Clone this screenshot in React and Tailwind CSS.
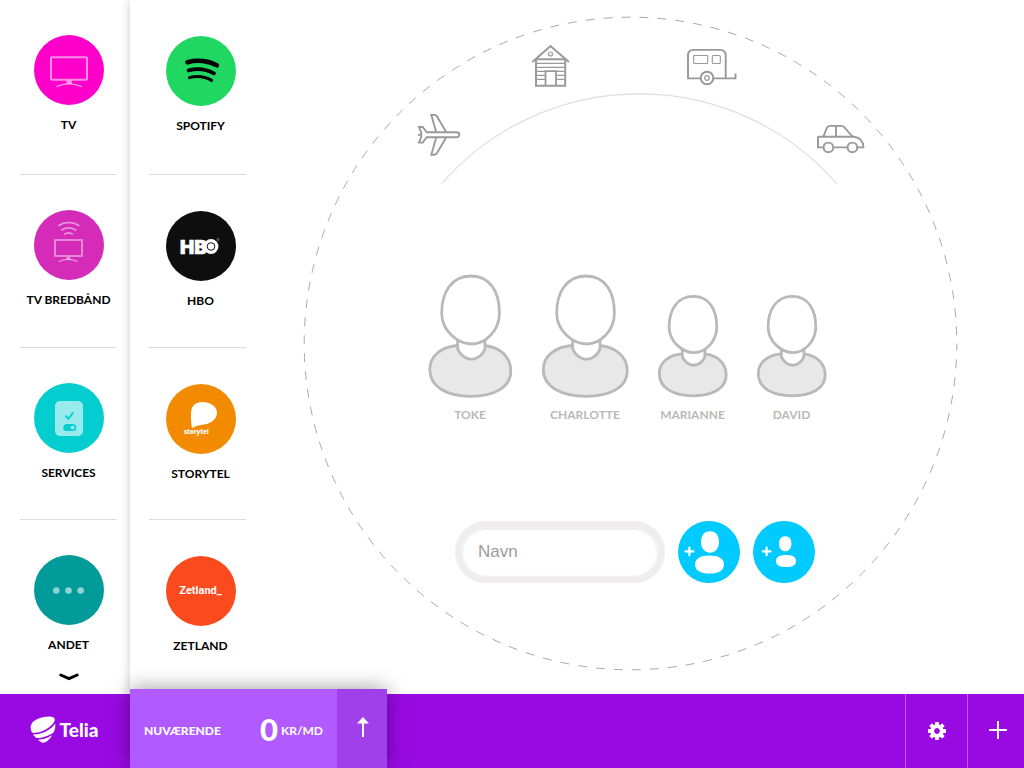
import React from 'react';

const toothAngles = [0, 45, 90, 135, 180, 225, 270, 315];

function TvIcon() {
  return (
    <svg className="size-[70px]" viewBox="0 0 70 70" fill="none" stroke="#fff" strokeOpacity="0.55" strokeWidth="2" aria-hidden="true">
      <rect x="17" y="22.3" width="36" height="22.4" rx="1" />
      <path d="M32.3 47.2h5.6" strokeWidth="3.4" />
      <path d="M22.3 51.6C30 48 40 48 47.8 51.6" strokeWidth="1.3" />
    </svg>
  );
}

function TvBroadbandIcon() {
  return (
    <svg className="size-[70px]" viewBox="0 0 70 70" fill="none" stroke="#fff" strokeOpacity="0.5" strokeWidth="1.7" aria-hidden="true">
      <path d="M24.3 15.7c6.5-4.2 14.5-4.2 21 0" />
      <path d="M27.2 20.3c4.6-3 10.4-3 15 0" />
      <path d="M30.3 24.3c2.6-1.8 6-1.8 8.6 0" />
      <rect x="21" y="30" width="27" height="16" />
      <path d="M32.6 48.2h3.6" strokeWidth="2.6" />
      <path d="M24.8 51.8c6-3 13-3 19.2 0" strokeWidth="1.2" />
    </svg>
  );
}

function ServicesIcon() {
  return (
    <svg className="size-[70px]" viewBox="0 0 70 70" fill="none" aria-hidden="true">
      <rect x="21" y="18" width="28" height="35" rx="5" fill="#99ebeb" />
      <path d="M31.3 32.5l3.2 3.3 4.8-6.6" stroke="#04cdd0" strokeWidth="1.8" />
      <rect x="29.3" y="41" width="13" height="7" rx="3.5" fill="#04cdd0" />
      <circle cx="38.7" cy="44.5" r="1.9" fill="#99ebeb" />
    </svg>
  );
}

function DotsIcon() {
  return (
    <svg className="size-[70px]" viewBox="0 0 70 70" fill="#8fd3d3" aria-hidden="true">
      <circle cx="22.3" cy="35.5" r="3.3" />
      <circle cx="34.5" cy="35.5" r="3.3" />
      <circle cx="46.7" cy="35.5" r="3.3" />
    </svg>
  );
}

function SpotifyIcon() {
  return (
    <svg className="size-[70px]" viewBox="0 0 70 70" fill="none" stroke="#000" strokeLinecap="round" aria-hidden="true">
      <circle cx="36" cy="34" r="23" stroke="#2bdc6b" strokeWidth="1" strokeDasharray="4 3" />
      <path d="M21.5 26.2C31 23.6 42.5 24.6 50.8 29.3" strokeWidth="4.6" />
      <path d="M22.6 34.4C31 32 40.5 33.2 48 37.4" strokeWidth="3.7" />
      <path d="M23.4 41.6C31 39.8 39 40.6 45.6 44.4" strokeWidth="3" />
    </svg>
  );
}

function HboIcon() {
  return (
    <svg className="size-[70px]" viewBox="0 0 70 70" aria-hidden="true">
      <text x="14" y="42.5" fill="#fff" stroke="#fff" strokeWidth="0.6" fontFamily="Inter, sans-serif" fontWeight="900" fontSize="19">HB</text>
      <circle cx="45" cy="35.5" r="7.4" fill="#fff" />
      <circle cx="45" cy="35.5" r="3.8" fill="none" stroke="#0e0e0e" strokeWidth="1" />
      <circle cx="52" cy="28.5" r="1" fill="none" stroke="#bbb" strokeWidth="0.5" />
    </svg>
  );
}

function StorytelIcon() {
  return (
    <svg className="size-[70px]" viewBox="0 0 70 70" fill="#fff" aria-hidden="true">
      <path d="M26 44.3C25.3 39 24.5 33 25.2 27C26 21 30.5 18 36.7 18C44 18 51 22.5 51 28.5C51 34 46.5 38.5 40.7 40C35 41 30 41.3 26 44.3Z" />
      <text x="18" y="49.5" fontFamily="'Open Sans', sans-serif" fontWeight="800" fontSize="6">storytel</text>
    </svg>
  );
}

function ZetlandIcon() {
  return <span className="font-[Roboto,sans-serif] text-[11px] font-bold text-white" aria-hidden="true">Zetland_</span>;
}

function Channel({ label, color, children }) {
  return (
    <li className="border-b border-[#dcdcdc] last:border-b-0">
      <button type="button" className="flex w-full flex-col items-center">
        <span className={`flex size-[70px] items-center justify-center rounded-full ${color}`}>{children}</span>
        <span className="mt-3 text-xs leading-4 font-bold whitespace-nowrap text-black">{label}</span>
      </button>
    </li>
  );
}

const narrowBody = 'M30 71.5C14 73 2.8 82 2.8 95.5C2.8 113 20 122.3 44 122.3C68 122.3 83.8 113 83.8 97C83.8 83 73 73 57.5 71.5Z';
const wideBody = 'M30 71.5C13 73 1.3 82 1.3 95.5C1.3 113 20 122.3 44 122.3C69 122.3 85.3 113 85.3 97C85.3 83 74 73 57.5 71.5Z';

function Person({ name, size, viewBox, body, stroke }) {
  return (
    <li className="flex flex-col items-center">
      <svg className={size} viewBox={viewBox} stroke="#b9b9b9" strokeWidth={stroke} aria-hidden="true">
        <path d={body} fill="#e8e8e8" />
        <path d="M30.7 64V75C33 81 39 85.3 44.5 85.3C50 85.3 56 81 58 75V64Z" fill="#fff" />
        <path d="M44 2C64 2 72.4 19 72.4 39C72.4 57 58 70 45 70C31 70 14.7 57 14.7 39C14.7 19 24 2 44 2Z" fill="#fff" />
      </svg>
      <span className="mt-[9px] text-xs leading-4 font-bold text-[#b9b9b9]">{name}</span>
    </li>
  );
}

function PlaneIcon() {
  return (
    <svg className="size-11" viewBox="0 0 44 44" fill="none" stroke="#999" strokeWidth="1.9" aria-hidden="true">
      <path d="M9.7 19.3H39.8a2.5 2.5 0 0 1 0 5H9.7L5.7 29.6H2L4.3 24L4.3 19.6L2 14H5.7Z" />
      <path d="M.8 21.8h4" />
      <path d="M19.2 19L14.3 1.9H17.5Q19 1.9 20 3.5L29.2 19" />
      <path d="M19.2 24.6L14.3 41.7H17.5Q19 41.7 20 40.1L29.2 24.6" />
    </svg>
  );
}

function HouseIcon() {
  return (
    <svg className="h-11 w-10" viewBox="0 0 40 44" fill="none" stroke="#999" strokeWidth="2" aria-hidden="true">
      <path d="M1.3 18L19.5 2L37.9 18" />
      <path d="M5 15.3H34.2V41.8H5Z" />
      <path d="M6 19.4H33M6 23.4H33M6 27.4H14M6 31.4H14M6 35.4H14M25 27.4H33M25 31.4H33M25 35.4H33" strokeWidth="1.1" />
      <path d="M14.5 41V27.2H25V41" strokeWidth="1.8" />
      <circle cx="19.5" cy="10" r="2" strokeWidth="1.2" />
    </svg>
  );
}

function CaravanIcon() {
  return (
    <svg className="h-10 w-[52px]" viewBox="0 0 52 40" fill="none" stroke="#999" strokeWidth="1.9" aria-hidden="true">
      <path d="M15 30.4H2V7.5Q2 1.9 7.5 1.9H34Q39.7 1.9 39.7 7.5V30.4" />
      <path d="M27 30.4H49.5V25.4" />
      <rect x="7.7" y="7.5" width="14" height="8" rx="0.5" strokeWidth="1.1" />
      <rect x="26.3" y="7.5" width="8" height="8" rx="1" strokeWidth="1.1" />
      <circle cx="21" cy="30" r="6.3" fill="#fff" />
      <circle cx="21" cy="30" r="2.3" strokeWidth="1.2" />
    </svg>
  );
}

function CarIcon() {
  return (
    <svg className="h-8 w-[50px]" viewBox="0 0 50 32" fill="none" stroke="#999" strokeWidth="1.9" aria-hidden="true">
      <path d="M2 23.4V13.5Q2 12.7 3 12.7H38Q47.4 14 47.4 23.4Z" />
      <path d="M7.4 12.7L10.8 4Q11.8 1.9 13.5 1.9H25.5Q27 1.9 28.2 3.2L36.5 12.7M20 1.9V12.7" />
      <circle cx="12.4" cy="23.4" r="4.8" fill="#fff" />
      <circle cx="36.4" cy="23.4" r="4.8" fill="#fff" />
    </svg>
  );
}

function PlaceButton({ label, place, children }) {
  return (
    <button type="button" aria-label={label} className={`absolute ${place}`}>
      {children}
    </button>
  );
}

function TeliaLogo() {
  return (
    <a href="#" className="flex w-[130px] shrink-0 items-center justify-center gap-1 pr-[2px] pb-[3px] text-white">
      <svg className="h-[27px] w-[26px]" viewBox="0 0 26 27" fill="currentColor" aria-hidden="true">
        <path d="M2 16.5C-2 9 3 3 14 1C20 -.3 25 .5 24.8 4C24 9 14 16 6 16.8C4 17 2.8 17 2 16.5Z" />
        <path d="M3 18.6C12 18.5 21 14 25.2 7.5C25.6 11 25 14 23.5 16.5C19 20 12 22 6.5 22C5 21 4 20 3 18.6Z" />
        <path d="M8.3 23.6C13 23.6 18 22 22 19.3C20 23.5 16 26.8 12.5 26.8C11 26.5 9.5 25.2 8.3 23.6Z" />
      </svg>
      <span className="text-[19px] leading-6 font-black">Telia</span>
    </a>
  );
}

export default function App() {
  return (
    <div className="flex min-h-screen flex-col bg-white font-[Lato,sans-serif]">
      <div className="flex flex-1">
        <nav aria-label="Kategorier" className="flex w-[130px] shrink-0 flex-col items-center pt-[35px] pl-[7px]">
          <ul className="grid w-[97px] grid-rows-[140px_138px_137px_auto] gap-y-[35px]">
            <Channel label="TV" color="bg-[#ff00cb]"><TvIcon /></Channel>
            <Channel label="TV BREDBÅND" color="bg-[#d42cb9]"><TvBroadbandIcon /></Channel>
            <Channel label="SERVICES" color="bg-[#04cdd0]"><ServicesIcon /></Channel>
            <Channel label="ANDET" color="bg-[#039a9a]"><DotsIcon /></Channel>
          </ul>
          <button type="button" aria-label="Vis flere" className="mt-3 flex h-6 w-10 items-center justify-center">
            <svg className="h-2 w-5" viewBox="0 0 20 8" fill="none" stroke="#000" strokeWidth="3" strokeLinecap="round" aria-hidden="true">
              <path d="M1.8 2L10 5.6L18.2 2" />
            </svg>
          </button>
        </nav>

        <div className="flex flex-1 bg-white shadow-[0_0_10px_rgba(0,0,0,0.2)]">
          <nav aria-label="Tjenester" className="flex w-[130px] shrink-0 flex-col pt-9 pl-[19px]">
            <ul className="grid w-[97px] grid-rows-[139px_137px_136px_auto] gap-y-9 *:pl-[6px]">
              <Channel label="SPOTIFY" color="bg-[#1fd761]"><SpotifyIcon /></Channel>
              <Channel label="HBO" color="bg-[#0e0e0e]"><HboIcon /></Channel>
              <Channel label="STORYTEL" color="bg-[#f28a02]"><StorytelIcon /></Channel>
              <Channel label="ZETLAND" color="bg-[#fb4a1e]"><ZetlandIcon /></Channel>
            </ul>
          </nav>

          <main className="flex flex-1 items-start justify-center pt-4 pr-[22px]">
            <div className="relative flex aspect-square w-[654px] flex-col items-center pt-[258px]">
              <svg className="pointer-events-none absolute inset-0 size-full overflow-visible" viewBox="0 0 654 654" fill="none" aria-hidden="true">
                <circle cx="326.5" cy="327.5" r="326.3" stroke="#aaa" strokeWidth="1" strokeDasharray="9 9" strokeDashoffset="2" />
                <path d="M137.7 167.7A262 262 0 0 1 532.7 167.7" stroke="#dedede" strokeWidth="1.2" />
              </svg>

              <PlaceButton label="Fly" place="top-[97px] left-[113px]"><PlaneIcon /></PlaceButton>
              <PlaceButton label="Sommerhus" place="top-7 left-[227px]"><HouseIcon /></PlaceButton>
              <PlaceButton label="Campingvogn" place="top-8 left-[382px]"><CaravanIcon /></PlaceButton>
              <PlaceButton label="Bil" place="top-[108px] left-[512px]"><CarIcon /></PlaceButton>

              <ul className="flex items-end gap-7 pr-2">
                <Person name="TOKE" size="h-[124px] w-[86px]" viewBox="0 0 86 124" body={narrowBody} stroke="2.8" />
                <Person name="CHARLOTTE" size="h-[124px] w-[88px]" viewBox="-1 0 88 124" body={wideBody} stroke="2.8" />
                <Person name="MARIANNE" size="h-[104px] w-[71px]" viewBox="0 0 86 124" body={narrowBody} stroke="3.4" />
                <Person name="DAVID" size="h-[104px] w-[71px]" viewBox="0 0 86 124" body={narrowBody} stroke="3.4" />
              </ul>

              <form className="mt-[98px] flex items-center gap-[13px] pl-2" onSubmit={(e) => e.preventDefault()}>
                <input
                  type="text"
                  aria-label="Navn"
                  placeholder="Navn"
                  className="h-[62px] w-[210px] rounded-full border-[7px] border-[#efedee] bg-white px-4 font-['Liberation_Sans',sans-serif] text-[17px] text-[#555] shadow-[inset_0_1px_3px_rgba(0,0,0,0.12)] outline-none placeholder:text-[#9d9d9d]"
                />
                <button type="submit" aria-label="Tilføj voksen" className="size-[62px] rounded-full bg-[#00caff]">
                  <svg className="size-[62px]" viewBox="0 0 62 62" fill="#fff" aria-hidden="true">
                    <path d="M32 10.3C38 10.3 41 15 41 21C41 27.5 37 31.7 32 31.7C27 31.7 23 27.5 23 21C23 15 26 10.3 32 10.3Z" />
                    <path d="M31.5 34.6C41 34.6 46 38 46 43.5C46 49.5 40.5 52.6 31.5 52.6C22.5 52.6 17 49.5 17 43.5C17 38 22 34.6 31.5 34.6Z" />
                    <path d="M11.4 26.5V34.3M7.5 30.4H15.3" stroke="#fff" strokeWidth="2.2" strokeLinecap="round" />
                  </svg>
                </button>
                <button type="submit" aria-label="Tilføj barn" className="size-[62px] rounded-full bg-[#00caff]">
                  <svg className="size-[62px]" viewBox="0 0 62 62" fill="#fff" aria-hidden="true">
                    <path d="M32.2 15.3C36.5 15.3 38.4 18.5 38.4 22.7C38.4 27.5 35.6 30.3 32.2 30.3C28.8 30.3 26 27.5 26 22.7C26 18.5 28 15.3 32.2 15.3Z" />
                    <path d="M33 34C39.5 34 43 36 43 40C43 44 39.5 46 33 46C26.5 46 23 44 23 40C23 36 26.5 34 33 34Z" />
                    <path d="M13.6 26.6V34.2M9.8 30.4H17.4" stroke="#fff" strokeWidth="2.2" strokeLinecap="round" />
                  </svg>
                </button>
              </form>
            </div>
          </main>
        </div>
      </div>

      <footer className="relative flex h-[74px] bg-[#990ae3] text-white">
        <TeliaLogo />
        <div className="-mt-[5px] flex w-[257px] shrink-0 shadow-[0_0_20px_rgba(0,0,0,0.4)]">
          <div className="flex flex-1 items-center justify-between bg-[#b05aff] px-[14px] pt-1">
            <span className="text-xs leading-4 font-black">NUVÆRENDE</span>
            <span className="flex items-center gap-[3px]">
              <span className="pb-1 text-[31px] leading-9 font-black">0</span>
              <span className="text-xs leading-4 font-bold">KR/MD</span>
            </span>
          </div>
          <button type="button" aria-label="Vis kurv" className="flex w-[50px] items-center justify-center bg-[#a040eb] pb-1 pl-[2px]">
            <svg className="h-5 w-3" viewBox="0 0 12 20" fill="#fff" aria-hidden="true">
              <path d="M6 0L12 6.5H7V20H5V6.5H0Z" />
            </svg>
          </button>
        </div>
        <div className="ml-auto flex">
          <button type="button" aria-label="Indstillinger" className="flex w-[62px] items-center justify-center border-l border-[#bb5df2]">
            <svg className="size-[18px]" viewBox="-9 -9 18 18" aria-hidden="true">
              <circle r="4.8" fill="none" stroke="#fff" strokeWidth="3.8" />
              {toothAngles.map((angle) => (
                <rect key={angle} x="-1.9" y="-9" width="3.8" height="3.5" rx="0.6" fill="#fff" transform={`rotate(${angle})`} />
              ))}
            </svg>
          </button>
          <button type="button" aria-label="Tilføj" className="flex w-[57px] items-center justify-center border-l border-[#bb5df2] pb-[2px] pl-1">
            <svg className="size-[18px]" viewBox="0 0 18 18" stroke="#fff" strokeWidth="2" aria-hidden="true">
              <path d="M9 0V18M0 9H18" />
            </svg>
          </button>
        </div>
      </footer>
    </div>
  );
}
